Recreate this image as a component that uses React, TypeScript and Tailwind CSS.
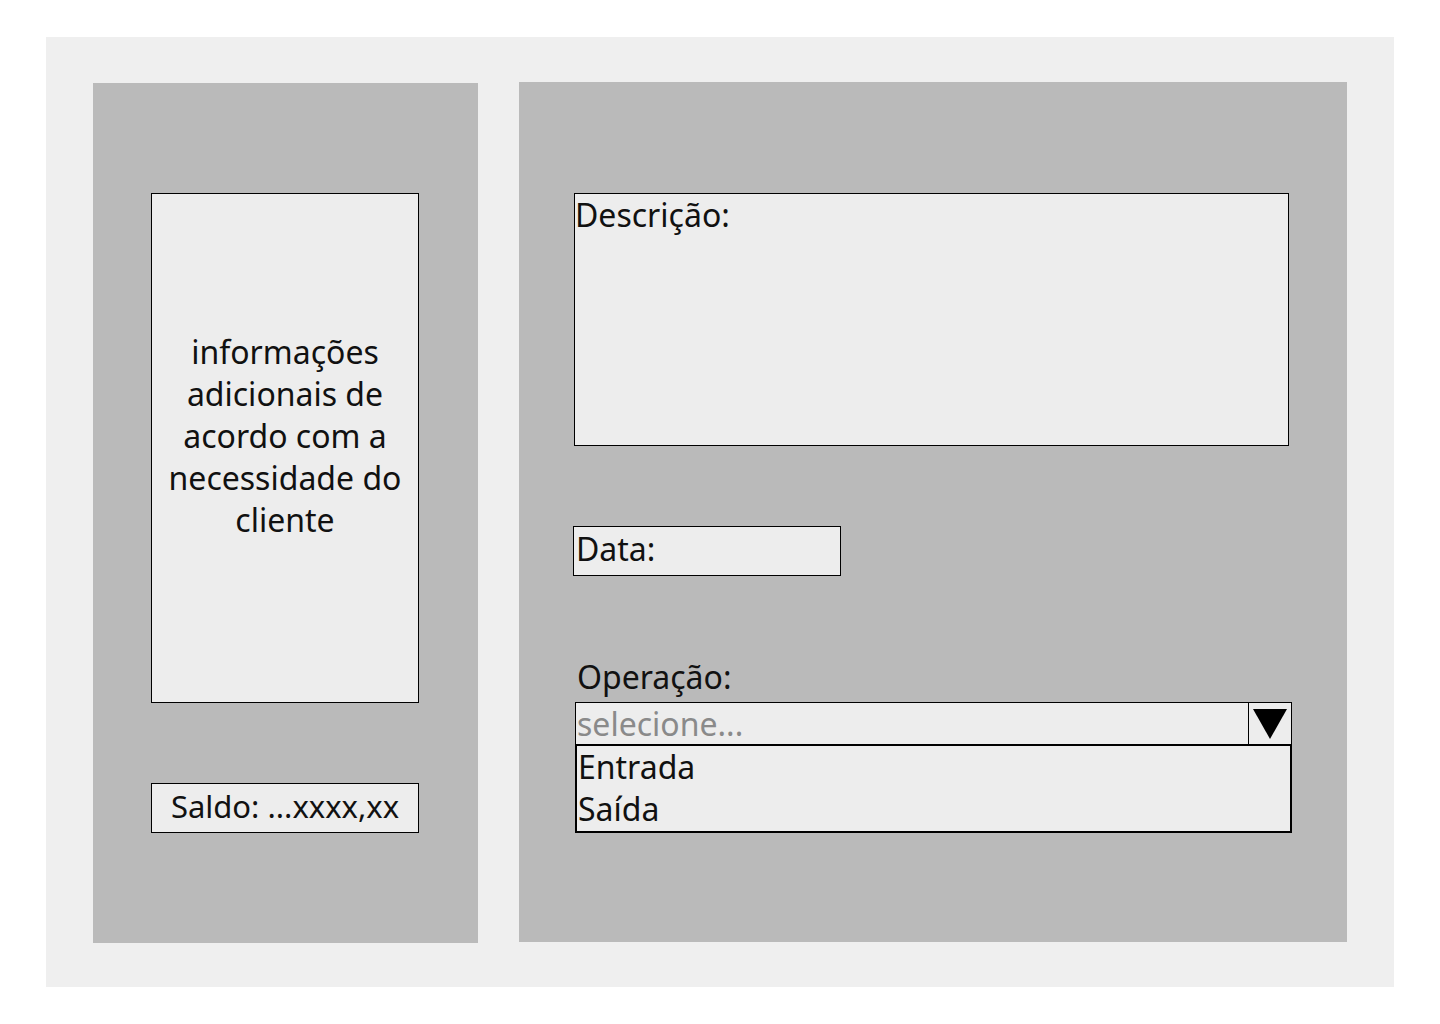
export default function App() {
  const font = { fontFamily: '"Noto Sans", "Open Sans", sans-serif' };
  return (
    <div className="w-[1440px] h-[1024px] bg-white pt-[37px] pl-[46px]" style={font}>
      <div className="w-[1348px] h-[950px] bg-[#efefef] flex pl-[47px] pt-[45px] gap-[41px]">
        <div className="w-[385px] h-[860px] mt-[1px] bg-[#bababa] pt-[110px] pl-[58px]">
          <div className="w-[268px] h-[510px] border border-black bg-[#ededed] flex items-center justify-center text-center text-[32px] leading-[42px] text-[#111] pb-[24px]">
            <div className="px-1">informações adicionais de acordo com a necessidade do cliente</div>
          </div>
          <div className="mt-[80px] w-[268px] h-[50px] border border-black bg-[#ededed] flex items-center justify-center text-[31px] leading-[42px] text-[#111] pb-[4px]">
            Saldo: ...xxxx,xx
          </div>
        </div>
        <div className="w-[828px] h-[860px] bg-[#bababa] pt-[111px] pl-[55px]">
          <div className="w-[715px] h-[253px] border border-black bg-[#ededed] text-[32px] leading-[42px] text-[#111]">
            Descrição:
          </div>
          <div className="mt-[80px] -ml-[1px] w-[268px] h-[50px] border border-black bg-[#ededed] text-[32px] leading-[44px] text-[#111] pl-[2px]">
            Data:
          </div>
          <div className="mt-[76px] ml-[3px] text-[32px] leading-[50px] text-[#111]">Operação:</div>
          <div className="ml-[1px] w-[717px]">
            <div className="h-[42px] border border-black border-b-0 bg-[#ededed] flex">
              <div className="flex-1 text-[32px] leading-[41px] text-[#8a8a8a] pl-[1px]">selecione...</div>
              <div className="w-[43px] border-l border-black flex items-start justify-center pt-[5px]">
                <svg width="36" height="32" viewBox="0 0 36 32">
                  <polygon points="1,1 35,1 18,31" fill="#000" />
                </svg>
              </div>
            </div>
            <div className="h-[89px] border-2 border-black bg-[#ededed] text-[32px] leading-[42px] text-[#111] pl-[1px]">
              <div>Entrada</div>
              <div>Saída</div>
            </div>
          </div>
        </div>
      </div>
    </div>
  );
}
